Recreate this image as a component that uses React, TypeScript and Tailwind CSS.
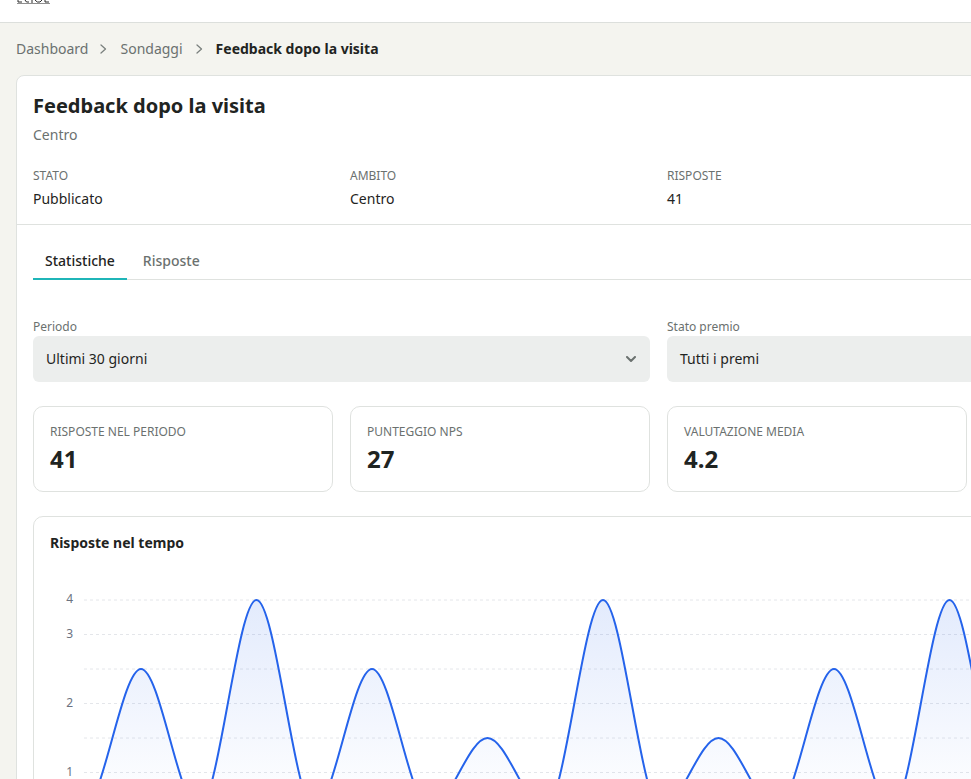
import React from "react";

const peaks = [668, 599, 668, 737, 599, 737, 668, 599, 737, 668];
const ZERO = 808;
const TOP = 553; // page y of the chart svg
const LEFT = 50; // page x of the chart svg

function buildPoints() {
  const pts: [number, number][] = [];
  for (let i = 0; i <= 20; i++) {
    const y = i % 2 === 0 ? ZERO : peaks[(i - 1) / 2];
    pts.push([83.25 + 57.75 * i - LEFT, y - TOP]);
  }
  return pts;
}

function linePath(pts: [number, number][]) {
  let d = `M${pts[0][0]} ${pts[0][1]}`;
  for (let i = 1; i < pts.length; i++) {
    const [x0, y0] = pts[i - 1];
    const [x1, y1] = pts[i];
    const dx = x1 - x0;
    d += ` C${x0 + dx / 3} ${y0} ${x1 - dx / 3} ${y1} ${x1} ${y1}`;
  }
  return d;
}

const gridYs = [599, 633.5, 668, 702.5, 737, 771.5];
const labels: { y: number; t: string }[] = [
  { y: 599, t: "4" },
  { y: 633.5, t: "3" },
  { y: 702.5, t: "2" },
  { y: 771.5, t: "1" },
];

function Crumb() {
  return (
    <svg width="8" height="10" viewBox="0 0 8 10" className="shrink-0">
      <path d="M2 1 L6.5 5 L2 9" fill="none" stroke="#7a807e" strokeWidth="1.3" strokeLinecap="round" strokeLinejoin="round" />
    </svg>
  );
}

function Chevron() {
  return (
    <svg width="10" height="7" viewBox="0 0 10 7">
      <path d="M1 1 L5 5 L9 1" fill="none" stroke="#6b716f" strokeWidth="2" strokeLinecap="round" strokeLinejoin="round" />
    </svg>
  );
}

function Chart() {
  const pts = buildPoints();
  const d = linePath(pts);
  const last = pts[pts.length - 1];
  const area = `${d} L${last[0]} ${ZERO - TOP} L${pts[0][0]} ${ZERO - TOP} Z`;
  return (
    <svg width="1217" height="300" className="block mt-px">
      <defs>
        <linearGradient id="fillGrad" x1="0" y1={599 - TOP} x2="0" y2={ZERO - TOP} gradientUnits="userSpaceOnUse">
          <stop offset="0" stopColor="#2563eb" stopOpacity="0.13" />
          <stop offset="1" stopColor="#2563eb" stopOpacity="0" />
        </linearGradient>
      </defs>
      {gridYs.map((y) => (
        <line key={y} x1={34} x2={1217} y1={y - TOP} y2={y - TOP} stroke="#e4e6ea" strokeWidth="1" strokeDasharray="3 3" />
      ))}
      {labels.map((l) => (
        <text key={l.t} x={23} y={l.y - TOP} textAnchor="end" dominantBaseline="middle" fontSize="12" fill="#6b7280">
          {l.t}
        </text>
      ))}
      <path d={area} fill="url(#fillGrad)" />
      <path d={d} fill="none" stroke="#2563eb" strokeWidth="2" />
    </svg>
  );
}

const stats = [
  { label: "Risposte nel periodo", value: "41" },
  { label: "Punteggio NPS", value: "27" },
  { label: "Valutazione media", value: "4.2" },
];

const info = [
  { label: "Stato", value: "Pubblicato" },
  { label: "Ambito", value: "Centro" },
  { label: "Risposte", value: "41" },
];

export default function App() {
  return (
    <div className="w-screen h-screen overflow-hidden bg-[#f4f4ef] font-['Noto_Sans',sans-serif] text-[#1f2422]">
      <div className="w-[1317px]">
        <header className="h-[23px] bg-white border-b border-[#dcdfdc] relative">
          <svg width="34" height="4" className="absolute left-[17px] top-0">
            <path d="M1 0 L1 2 L5 2 M8 0 Q9 3 12 2 M15 0 L15 3 M18 0 Q20 3 23 2 L25 0 M28 0 L28 2 L32 2" fill="none" stroke="#2b2b2b" strokeWidth="1" />
            <path d="M0 3.5 L33 3.5" stroke="#444" strokeWidth="0.6" />
          </svg>
        </header>

        <main className="px-4 pt-4">
          <nav className="flex items-center h-5 text-sm">
            <span className="text-[#6b716f]">Dashboard</span>
            <span className="ml-[11px] mr-[13px] flex"><Crumb /></span>
            <span className="text-[#6b716f]">Sondaggi</span>
            <span className="ml-[12px] mr-[13px] flex"><Crumb /></span>
            <span className="font-bold text-[#1f2422]">Feedback dopo la visita</span>
          </nav>

          <section className="mt-4 bg-white border border-[#dfe2df] rounded-lg">
            <div className="px-4 pt-4 pb-[15px]">
              <h1 className="text-xl leading-7 font-bold">Feedback dopo la visita</h1>
              <p className="mt-[5px] text-sm leading-5 text-[#6b716f]">Centro</p>
              <div className="mt-[23px] grid grid-cols-4 gap-x-[17px]">
                {info.map((i) => (
                  <div key={i.label}>
                    <div className="text-xs leading-4 uppercase text-[#6b716f]">{i.label}</div>
                    <div className="mt-[5px] text-sm leading-5">{i.value}</div>
                  </div>
                ))}
              </div>
            </div>

            <div className="border-t border-[#dfe2df] px-4 pt-[17px] pb-6">
              <div className="flex gap-1 border-b border-[#dfe2df] text-sm leading-5 font-medium">
                <button className="px-3 pt-[9px] pb-[7px] border-b-2 border-[#1fb5b8] -mb-px text-[#1f2422]">Statistiche</button>
                <button className="px-3 pt-[9px] pb-[7px] border-b-2 border-transparent -mb-px text-[#6b716f]">Risposte</button>
              </div>

              <div className="mt-[39px] grid grid-cols-2 gap-x-[17px]">
                <div>
                  <div className="text-xs leading-4 text-[#6b716f]">Periodo</div>
                  <div className="mt-px h-[46px] rounded-md bg-[#eceeed] flex items-center justify-between pl-[13px] pr-[14px] text-sm">
                    <span>Ultimi 30 giorni</span>
                    <Chevron />
                  </div>
                </div>
                <div>
                  <div className="text-xs leading-4 text-[#6b716f]">Stato premio</div>
                  <div className="mt-px h-[46px] rounded-md bg-[#eceeed] flex items-center justify-between pl-[13px] pr-[14px] text-sm">
                    <span>Tutti i premi</span>
                    <Chevron />
                  </div>
                </div>
              </div>

              <div className="mt-6 grid grid-cols-4 gap-x-[17px]">
                {stats.map((s) => (
                  <div key={s.label} className="h-[86px] border border-[#dfe2df] rounded-[10px] px-4 pt-[17px]">
                    <div className="text-xs leading-4 uppercase text-[#6b716f]">{s.label}</div>
                    <div className="mt-[3px] text-2xl leading-8 font-bold">{s.value}</div>
                  </div>
                ))}
              </div>

              <div className="mt-6 border border-[#dfe2df] rounded-[10px] px-4 pt-4 pb-4">
                <h2 className="text-sm leading-5 font-bold">Risposte nel tempo</h2>
                <Chart />
              </div>
            </div>
          </section>
        </main>
      </div>
    </div>
  );
}
